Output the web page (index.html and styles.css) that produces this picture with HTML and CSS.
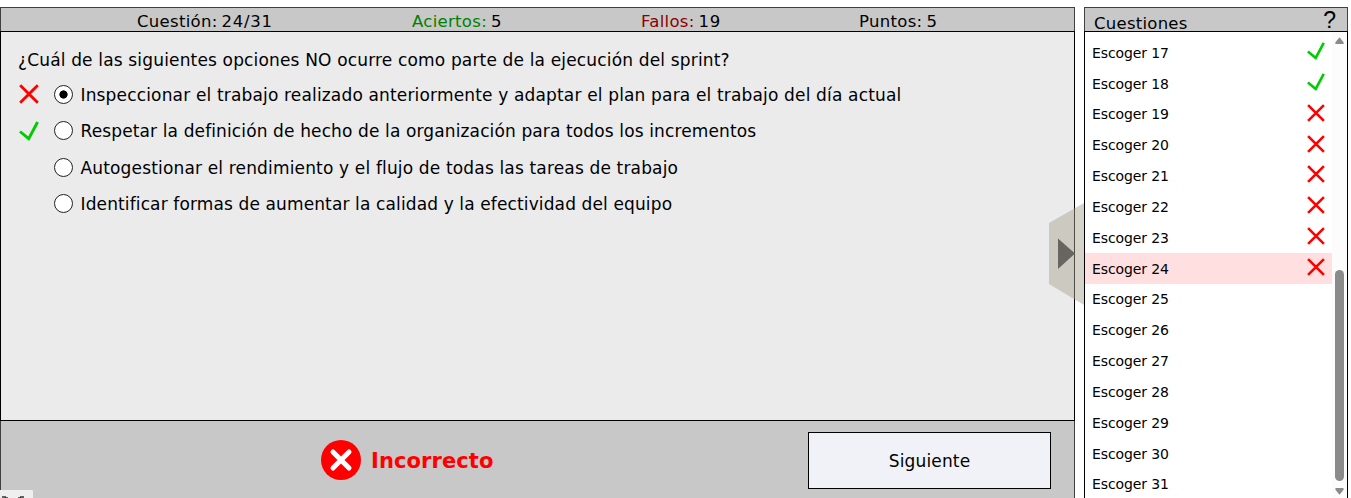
FILE: index.html
```html
<!DOCTYPE html>
<html lang="es">
<head>
<meta charset="utf-8">
<title>Cuestionario</title>
<link rel="stylesheet" href="styles.css">
</head>
<body>
<svg class="defs" aria-hidden="true">
  <symbol id="cross" viewBox="0 0 20 20"><path d="M1.2 1.2 18.8 18.8M18.8 1.2 1.2 18.8"/></symbol>
  <symbol id="check" viewBox="0 0 20 20"><path d="M1 10.5 9.7 17.7 18.6 1"/></symbol>
</svg>
<div class="layout">
  <main class="quiz">
    <header class="stats">
      <div class="stat s-count"><span>Cuestión:</span><b>24/31</b></div>
      <div class="stat s-ok"><span>Aciertos:</span><b>5</b></div>
      <div class="stat s-bad"><span>Fallos:</span><b>19</b></div>
      <div class="stat s-points"><span>Puntos:</span><b>5</b></div>
    </header>
    <section class="question">
      <p class="prompt">¿Cuál de las siguientes opciones NO ocurre como parte de la ejecución del sprint?</p>
      <div class="option"><svg class="mark bad"><use href="#cross"/></svg><i class="radio on"></i><span class="label">Inspeccionar el trabajo realizado anteriormente y adaptar el plan para el trabajo del día actual</span></div>
      <div class="option"><svg class="mark ok"><use href="#check"/></svg><i class="radio"></i><span class="label tight">Respetar la definición de hecho de la organización para todos los incrementos</span></div>
      <div class="option"><span class="mark"></span><i class="radio"></i><span class="label">Autogestionar el rendimiento y el flujo de todas las tareas de trabajo</span></div>
      <div class="option"><span class="mark"></span><i class="radio"></i><span class="label tight">Identificar formas de aumentar la calidad y la efectividad del equipo</span></div>
    </section>
    <footer class="actions">
      <div class="result">
        <svg class="result-icon" viewBox="0 0 40 40"><circle cx="20" cy="20" r="20"/><path d="M12 12 28 28M28 12 12 28"/></svg>
        <strong>Incorrecto</strong>
      </div>
      <button class="next">Siguiente</button>
    </footer>
  </main>
  <aside class="panel">
    <header class="panel-head"><span>Cuestiones</span><span class="help">?</span></header>
    <div class="panel-body">
      <ul class="list">
        <li>Escoger 17<svg class="tick ok"><use href="#check"/></svg></li>
        <li>Escoger 18<svg class="tick ok"><use href="#check"/></svg></li>
        <li>Escoger 19<svg class="tick bad"><use href="#cross"/></svg></li>
        <li>Escoger 20<svg class="tick bad"><use href="#cross"/></svg></li>
        <li>Escoger 21<svg class="tick bad"><use href="#cross"/></svg></li>
        <li>Escoger 22<svg class="tick bad"><use href="#cross"/></svg></li>
        <li>Escoger 23<svg class="tick bad"><use href="#cross"/></svg></li>
        <li class="current">Escoger 24<svg class="tick bad"><use href="#cross"/></svg></li>
        <li>Escoger 25</li>
        <li>Escoger 26</li>
        <li>Escoger 27</li>
        <li>Escoger 28</li>
        <li>Escoger 29</li>
        <li>Escoger 30</li>
        <li>Escoger 31</li>
      </ul>
      <div class="scrollbar">
        <svg class="arrow" viewBox="0 0 9 7"><path d="M4 .8Q4.500 0 5 .8L8.700 5.500Q9 7 8 7H1Q0 7 .3 5.500Z"/></svg>
        <div class="thumb"></div>
        <svg class="arrow down" viewBox="0 0 9 7"><path d="M4 .8Q4.500 0 5 .8L8.700 5.500Q9 7 8 7H1Q0 7 .3 5.500Z"/></svg>
      </div>
    </div>
  </aside>
</div>
<svg class="drawer" viewBox="0 0 35 102"><path class="tab" d="M35 0 0 20V81L35 102Z"/><path class="play" d="M9 35.500 26 50.500 9 66Z"/></svg>
<svg class="status" viewBox="0 0 33 8"><path class="bubble" d="M0 0H32Q33 0 33 1V8H0Z"/><path class="trace" d="M2 7H6M5 8H8M20 7H24M18 8H21"/></svg>
</body>
</html>
```
FILE: styles.css
```css
* { box-sizing: border-box; }
body {
  margin: 0;
  height: 498px;
  overflow: hidden;
  background: #fff;
  color: #000;
  font: 17px/20px Verdana, "DejaVu Sans", sans-serif;
  letter-spacing: .16px;
}
.defs { position: absolute; width: 0; height: 0; }
.layout { display: flex; gap: 9px; height: 498px; padding-top: 7px; }
.quiz { width: 1075px; display: flex; flex-direction: column; }
.stats {
  flex: none;
  display: grid;
  grid-template-columns: 136px 275px 229px 218px auto;
  height: 24px;
  background: #c8c8c8;
  border: 1px solid #404040;
  border-bottom: 0;
  font-size: 16.5px;
}
.stat { display: flex; gap: 4px; line-height: 27px; white-space: nowrap; letter-spacing: .3px; }
.stat b { font-weight: normal; letter-spacing: .7px; }
.s-count { grid-column: 2; }
.s-ok span { color: #008000; }
.s-bad span { color: #8b0000; }
.question {
  height: 390px;
  padding: 18px 17px;
  background: #ebebeb;
  border: 1px solid #000;
}
.prompt { margin: 0 0 6px; white-space: nowrap; }
.option { display: flex; align-items: center; height: 36.5px; white-space: nowrap; }
.label { padding-top: 1px; }
.tight { letter-spacing: .125px; }
.mark { width: 20px; height: 20px; margin: 0 16px 0 1px; }
.ok, .bad { fill: none; stroke-width: 2.9; overflow: visible; }
.ok { stroke: #00cd00; }
.bad { stroke: #f00; }
.radio {
  width: 19px;
  height: 19px;
  margin: 0 7.500px 0 -1px;
  border: 1px solid #222;
  border-radius: 50%;
  background: #fff;
}
.radio.on { background: radial-gradient(circle, #000 0 3.800px, #fff 4.400px); }
.actions {
  display: flex;
  flex: 1;
  justify-content: space-between;
  padding: 11px 23px 9px 320px;
  background: #c8c8c8;
  border: solid #404040;
  border-width: 0 1px;
}
.result { display: flex; align-items: center; gap: 10px; height: 56px; color: #f00; font-size: 21px; letter-spacing: .1px; }
.result strong { padding-top: 2px; }
.result-icon { width: 40px; height: 40px; }
.result-icon circle { fill: #f00; }
.result-icon path { stroke: #fff; stroke-width: 5; stroke-linecap: round; }
.next {
  width: 243px;
  height: 57px;
  padding: 0;
  border: 1px solid #000;
  background: #f1f2f7;
  color: #000;
  font: inherit;
  letter-spacing: .16px;
}
.panel { width: 264px; display: flex; flex-direction: column; }
.panel-head {
  display: flex;
  justify-content: space-between;
  height: 24px;
  padding: 0 11px 0 9px;
  background: #c8c8c8;
  border: 1px solid #404040;
  border-bottom: 0;
  font-size: 16.5px;
  letter-spacing: .25px;
  line-height: 31px;
}
.help { font-family: "Liberation Sans", sans-serif; font-size: 23px; line-height: 24px; letter-spacing: 0; }
.panel-body {
  display: flex;
  flex: 1;
  border: 1px solid #000;
  border-bottom: 0;
}
.list { flex: 1; margin: 0; padding: 5.400px 0 0; list-style: none; font-size: 14px; letter-spacing: -.1px; }
.list li { display: flex; justify-content: space-between; align-items: center; height: 30.830px; padding: 0 7px; }
.list .current { background: #ffdfdf; }
.tick { width: 18px; height: 18px; margin-bottom: 3.500px; }
.scrollbar { width: 15px; padding: 5px 3px 0; background: #fcfcfc; display: flex; flex-direction: column; align-items: center; }
.arrow { width: 9px; height: 7px; fill: #8b8b8b; }
.down { transform: rotate(180deg); }
.thumb { width: 9px; height: 211px; margin: 226px 0 7px; border-radius: 5px; background: #8b8b8b; }
/* Drawer handle overlapping both panels */
.drawer { position: absolute; left: 1049px; top: 203px; width: 35px; height: 102px; }
.tab { fill: rgba(170, 163, 145, .48); }
.play { fill: #666560; }
.status { position: absolute; left: 0; top: 490px; width: 33px; height: 8px; }
.bubble { fill: #efefef; }
.trace { stroke: #333; stroke-width: 1.500; fill: none; }
```
